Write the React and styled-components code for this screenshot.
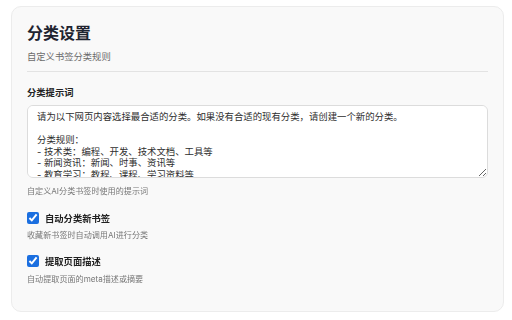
import styled, { createGlobalStyle } from "styled-components";

const GlobalStyle = createGlobalStyle`
    html, body {
        margin: 0;
        padding: 0;
        background: #ffffff;
        font-family: Inter, "Noto Sans CJK SC", sans-serif;
    }
`

const Page = styled.div`
    width: 512px;
    height: 320px;
    padding: 6px 8px 8px 11px;
    box-sizing: border-box;
`

const Card = styled.section`
    width: 493px;
    height: 306px;
    box-sizing: border-box;
    background: #f9f9f9;
    border: 1px solid #ececec;
    border-radius: 10px;
    padding: 16px 15px 0 15px;
    display: flex;
    flex-direction: column;
`

const Title = styled.h1`
    margin: 0;
    font-size: 16px;
    line-height: 20px;
    font-weight: 700;
    color: #1f2430;
`

const Subtitle = styled.p`
    margin: 7px 0 0;
    font-size: 9.3px;
    line-height: 14px;
    color: #6b6b6b;
`

const Divider = styled.hr`
    margin: 7px 0 0;
    border: none;
    border-top: 1px solid #e3e3e3;
    height: 0;
`

const Label = styled.label`
    margin-top: ${p => p.$gap || 0}px;
    font-size: 9.3px;
    line-height: 14px;
    font-weight: 600;
    color: #222;
`

const Prompt = styled.textarea`
    margin-top: 5px;
    height: 73px;
    box-sizing: border-box;
    padding: 5px 9px;
    background: #fff;
    border: 1px solid #dcdcdc;
    border-radius: 6px;
    font-family: Inter, "Noto Sans CJK SC", sans-serif;
    font-size: 9.4px;
    line-height: 11.6px;
    color: #2e2e2e;
    resize: vertical;
    outline: none;
`

const Hint = styled.p`
    margin: ${p => p.$gap || 0}px 0 0;
    font-size: 8.1px;
    line-height: 14px;
    color: #777;
`

const CheckRow = styled.label`
    margin-top: ${p => p.$gap || 0}px;
    display: flex;
    align-items: center;
    gap: 6px;
    height: 14px;
    font-size: 9.3px;
    font-weight: 600;
    color: #222;
`

const Box = styled.input`
    margin: 0;
    width: 12px;
    height: 12px;
    accent-color: #1b6fe0;
`

const promptText = `请为以下网页内容选择最合适的分类。如果没有合适的现有分类，请创建一个新的分类。

分类规则：
- 技术类：编程、开发、技术文档、工具等
- 新闻资讯：新闻、时事、资讯等
- 教育学习：教程、课程、学习资料等
- 娱乐休闲：视频、音乐、游戏等
- 生活服务：购物、美食、旅游等`

function App() {
    return (
        <Page>
            <GlobalStyle />
            <Card>
                <Title>分类设置</Title>
                <Subtitle>自定义书签分类规则</Subtitle>
                <Divider />

                <Label $gap={14}>分类提示词</Label>
                <Prompt defaultValue={promptText} spellCheck={false} />
                <Hint $gap={6}>自定义AI分类书签时使用的提示词</Hint>

                <CheckRow $gap={13}>
                    <Box type="checkbox" defaultChecked />
                    自动分类新书签
                </CheckRow>
                <Hint $gap={3}>收藏新书签时自动调用AI进行分类</Hint>

                <CheckRow $gap={12}>
                    <Box type="checkbox" defaultChecked />
                    提取页面描述
                </CheckRow>
                <Hint $gap={4}>自动提取页面的meta描述或摘要</Hint>
            </Card>
        </Page>
    )
}

export default App;
